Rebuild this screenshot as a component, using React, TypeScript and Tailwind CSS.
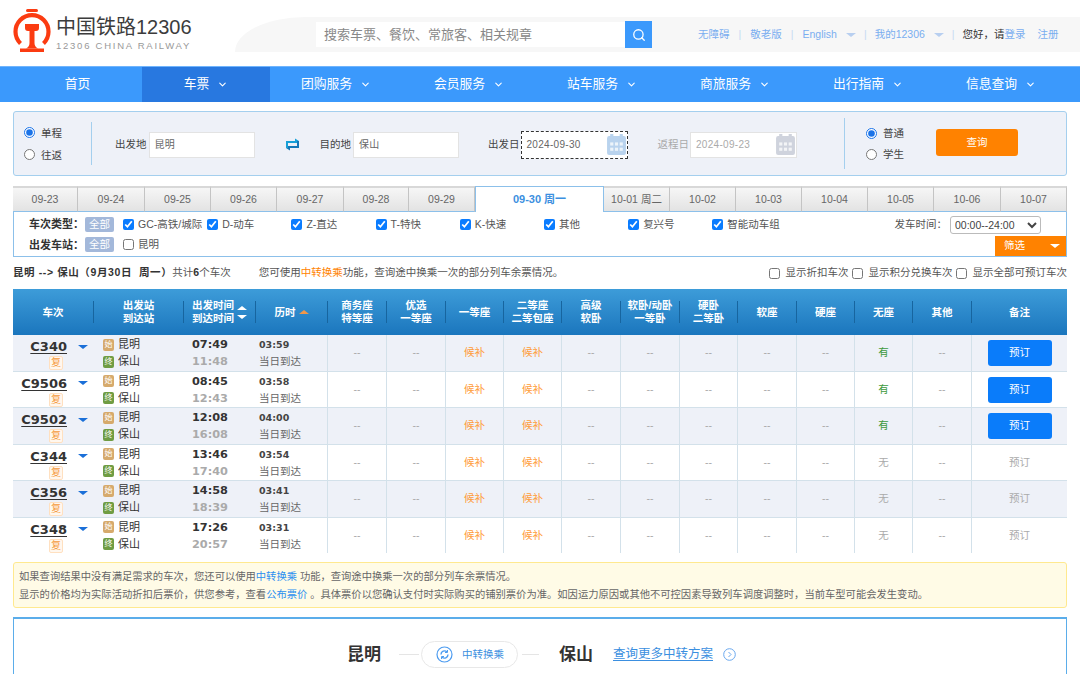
import { ChevronDown, Search } from "lucide-react";

const navItems = [
  { label: "首页", width: "w-[129px]", arrow: false },
  { label: "车票", width: "w-[128px] bg-[#2878e0]", arrow: true },
  { label: "团购服务", width: "w-[132px]", arrow: true },
  { label: "会员服务", width: "w-[134px]", arrow: true },
  { label: "站车服务", width: "w-[132px]", arrow: true },
  { label: "商旅服务", width: "w-[134px]", arrow: true },
  { label: "出行指南", width: "w-[132px]", arrow: true },
  { label: "信息查询", width: "w-[134px]", arrow: true },
];

const dates = [
  { label: "09-23", width: "w-[65px]" },
  { label: "09-24", width: "w-[67px]" },
  { label: "09-25", width: "w-[66px]" },
  { label: "09-26", width: "w-[66px]" },
  { label: "09-27", width: "w-[67px]" },
  { label: "09-28", width: "w-[65px]" },
  { label: "09-29", width: "w-[66px]" },
  { label: "09-30 周一", width: "w-[129px]", active: true },
  { label: "10-01 周二", width: "w-[66px]" },
  { label: "10-02", width: "w-[66px]" },
  { label: "10-03", width: "w-[66px]" },
  { label: "10-04", width: "w-[66px]" },
  { label: "10-05", width: "w-[66px]" },
  { label: "10-06", width: "w-[67px]" },
  { label: "10-07", width: "w-[66px]" },
];

const trainTypes = ["GC-高铁/城际", "D-动车", "Z-直达", "T-特快", "K-快速", "其他", "复兴号", "智能动车组"];

const trains = [
  { code: "C340", dep: "07:49", arr: "11:48", dur: "03:59", open: true },
  { code: "C9506", dep: "08:45", arr: "12:43", dur: "03:58", open: true },
  { code: "C9502", dep: "12:08", arr: "16:08", dur: "04:00", open: true },
  { code: "C344", dep: "13:46", arr: "17:40", dur: "03:54", open: false },
  { code: "C356", dep: "14:58", arr: "18:39", dur: "03:41", open: false },
  { code: "C348", dep: "17:26", arr: "20:57", dur: "03:31", open: false },
];

const columns = "grid grid-cols-[80px_90px_72px_72px_59px_59px_58px_58px_59px_59px_58px_59px_58px_58px_59px_96px]";

const headCells = [
  ["车次"],
  ["出发站", "到达站"],
  ["出发时间", "到达时间"],
  ["历时"],
  ["商务座", "特等座"],
  ["优选", "一等座"],
  ["一等座"],
  ["二等座", "二等包座"],
  ["高级", "软卧"],
  ["软卧/动卧", "一等卧"],
  ["硬卧", "二等卧"],
  ["软座"],
  ["硬座"],
  ["无座"],
  ["其他"],
  ["备注"],
];

function Logo() {
  return (
    <svg width="38" height="43" viewBox="0 0 38 43" className="shrink-0">
      <rect x="13" y="0" width="12" height="3" rx="1.5" fill="#fb3b11" />
      <path d="M7.5 34.5 A16.5 16.5 0 1 1 30.5 34.5" fill="none" stroke="#fb3b11" strokeWidth="4.2" />
      <path d="M12 15 H26 V19 Q26 22 23 22 H21.5 V34 Q21.5 37.5 25 39.5 H13 Q16.5 37.5 16.5 34 V22 H15 Q12 22 12 19 Z" fill="#fb3b11" />
      <rect x="7" y="39.5" width="24" height="3.5" fill="#fb3b11" />
    </svg>
  );
}

function Calendar({ dim }: { dim?: boolean }) {
  const color = dim ? "#cfd3dd" : "#b9d3ee";
  return (
    <svg width="19" height="21" viewBox="0 0 18 20" className="shrink-0">
      <rect x="0" y="2" width="18" height="18" rx="2" fill={color} />
      <rect x="3" y="0" width="3" height="4" fill={color} />
      <rect x="12" y="0" width="3" height="4" fill={color} />
      <g fill="#fff" opacity="0.75">
        <rect x="3" y="8" width="3" height="3" />
        <rect x="7.5" y="8" width="3" height="3" />
        <rect x="12" y="8" width="3" height="3" />
        <rect x="3" y="13" width="3" height="3" />
        <rect x="7.5" y="13" width="3" height="3" />
        <rect x="12" y="13" width="3" height="3" />
      </g>
    </svg>
  );
}

function SwapIcon() {
  return (
    <svg width="15" height="13" viewBox="0 0 15 13" className="shrink-0">
      <path d="M1 5 V3 H10 V0.5 L14 3 V5 Z" fill="#17a0d8" />
      <path d="M14 8 V10 H5 V12.5 L1 10 V8 Z" fill="#1578b8" />
      <rect x="1" y="3" width="2" height="7" fill="#17a0d8" />
      <rect x="12" y="3" width="2" height="7" fill="#1578b8" />
    </svg>
  );
}

function Caret({ className }: { className: string }) {
  return <span className={`inline-block h-0 w-0 border-x-[5px] border-x-transparent ${className}`} />;
}

function Field({ label, value, wide, dashed, dim }: { label: string; value: string; wide?: boolean; dashed?: boolean; dim?: boolean }) {
  return (
    <div className="mt-[2px] flex items-center">
      <span className={`text-[10.5px] ${wide ? "mr-px" : "mr-[2px]"} ${dim ? "text-[#aaa]" : "text-[#444]"}`}>{label}</span>
      <div
        className={`flex items-center justify-between bg-white pl-[5px] pr-[1px] text-[10px] ${wide ? "w-[107px]" : "w-[106px]"} ${
          dashed ? "h-[28px] border border-dashed border-[#333]" : "h-[26px] border border-[#e3e3e3]"
        } ${dim ? "text-[#aaa]" : "text-[#666]"}`}
      >
        <span className="tracking-[0.3px]">{value}</span>
        {wide && <Calendar dim={dim} />}
      </div>
    </div>
  );
}

function Radio({ label, checked }: { label: string; checked?: boolean }) {
  return (
    <label className="flex items-center gap-[6px] text-[10.5px] leading-[14px] text-[#444]">
      <input type="radio" readOnly checked={!!checked} className="m-0 h-[11px] w-[11px] accent-[#1a73e8]" />
      {label}
    </label>
  );
}

function Check({ label, checked, wide, className }: { label: string; checked?: boolean; wide?: boolean; className?: string }) {
  return (
    <label className={`flex items-center text-[10.5px] text-[#555] ${wide ? "gap-[6px]" : "gap-[4px]"} ${className ?? ""}`}>
      <input type="checkbox" readOnly checked={!!checked} className="m-0 h-[11px] w-[11px] shrink-0 accent-[#0a7cff]" />
      {label}
    </label>
  );
}

function AllBadge() {
  return (
    <span className="flex h-[15px] w-[29px] items-center justify-center rounded-[2px] bg-[#a3b8da] text-[10.5px] text-white">全部</span>
  );
}

function StationLine({ mark, name, tone }: { mark: string; name: string; tone: string }) {
  return (
    <div className="flex items-center gap-[4px]">
      <span className={`flex h-[12px] w-[11px] items-center justify-center rounded-[2px] text-[8px] leading-none text-white ${tone}`}>{mark}</span>
      <span className="text-[11px] leading-[17px] text-[#333]">{name}</span>
    </div>
  );
}

function SeatCell({ children, className }: { children?: React.ReactNode; className?: string }) {
  return (
    <div className={`flex items-center justify-center border-l border-[#d3e1ea] pt-px text-[10.5px] ${className ?? "text-[#aaa]"}`}>
      {children ?? "--"}
    </div>
  );
}

function TrainRow({ train, shaded }: { train: (typeof trains)[number]; shaded: boolean }) {
  return (
    <div className={`${columns} min-h-0 flex-1 border-b border-[#d3e1ea] last:border-b-0 ${shaded ? "bg-[#eef1f8]" : "bg-white"}`}>
      <div className="flex flex-col pr-[5px] pt-[2px]">
        <div className="flex h-[19px] items-center justify-end">
          <span className="font-['DejaVu_Sans',sans-serif] text-[13px] font-bold leading-none text-[#333] underline underline-offset-2">{train.code}</span>
          <Caret className="ml-[11px] border-t-[4px] border-t-[#1a6fd8]" />
        </div>
        <div className="flex justify-end pr-[25px]">
          <span className="flex h-[14px] w-[14px] items-center justify-center rounded-[2px] border border-[#ffe0c0] bg-[#fff7ee] text-[10px] leading-none text-[#f59a3c]">复</span>
        </div>
      </div>
      <div className="flex flex-col justify-center pl-[10px] pt-px">
        <StationLine mark="始" name="昆明" tone="bg-[#d6aa6c]" />
        <StationLine mark="终" name="保山" tone="bg-[#6f9c43]" />
      </div>
      <div className="flex flex-col justify-center pl-[9px] pt-px font-['DejaVu_Sans',sans-serif] text-[11.3px] font-bold leading-[17px]">
        <span className="text-[#333]">{train.dep}</span>
        <span className="text-[#aaa]">{train.arr}</span>
      </div>
      <div className="flex flex-col justify-center pl-[4px] pt-px leading-[17px]">
        <span className="font-['DejaVu_Sans',sans-serif] text-[9.5px] font-bold text-[#444]">{train.dur}</span>
        <span className="text-[10.5px] text-[#666]">当日到达</span>
      </div>
      <SeatCell />
      <SeatCell />
      <SeatCell className="text-[#ff9c38]">候补</SeatCell>
      <SeatCell className="text-[#ff9c38]">候补</SeatCell>
      <SeatCell />
      <SeatCell />
      <SeatCell />
      <SeatCell />
      <SeatCell />
      {train.open ? <SeatCell className="text-[#3c9a3c]">有</SeatCell> : <SeatCell>无</SeatCell>}
      <SeatCell />
      <SeatCell>
        {train.open ? (
          <button className="h-[26px] w-[64px] rounded-[3px] bg-[#0a7cfa] text-[10.5px] text-white">预订</button>
        ) : (
          "预订"
        )}
      </SeatCell>
    </div>
  );
}

export default function App() {
  return (
    <div className="h-[674px] w-[1080px] overflow-hidden bg-white font-['Liberation_Sans','Noto_Sans_CJK_SC',sans-serif]">
      {/* top bar */}
      <header className="flex h-[66px]">
        <div className="flex w-[235px] shrink-0 items-start pl-[13px] pt-[9px]">
          <Logo />
          <div className="ml-[5px] pt-[6px]">
            <div className="text-[20px] leading-[24px] text-[#3c3c3c]">中国铁路12306</div>
            <div className="mt-[1px] whitespace-nowrap text-[9.5px] leading-[12px] tracking-[1.75px] text-[#999]">12306 CHINA RAILWAY</div>
          </div>
        </div>
        <div className="mt-[17px] flex h-[35px] flex-1 items-center rounded-tl-[70px_35px] bg-[#f7f7f7] pl-[81px]">
          <div className="flex h-[25px] w-[309px] items-center bg-white pl-[8px] text-[13px] text-[#888]">搜索车票、餐饮、常旅客、相关规章</div>
          <div className="flex h-[27px] w-[27px] items-center justify-center bg-[#3b99fc]">
            <Search size={14} color="#fff" strokeWidth={2.2} />
          </div>
          <div className="ml-[46px] flex items-center text-[10.5px] text-[#7aaef0]">
            <span>无障碍</span>
            <span className="mx-[9px] text-[#c6daf2]">|</span>
            <span>敬老版</span>
            <span className="mx-[9px] text-[#c6daf2]">|</span>
            <span>English</span>
            <Caret className="ml-[9px] border-t-[4px] border-t-[#b8cff0]" />
            <span className="mx-[8px] text-[#c6daf2]">|</span>
            <span>我的12306</span>
            <Caret className="ml-[9px] border-t-[4px] border-t-[#b8cff0]" />
            <span className="mx-[8px] text-[#c6daf2]">|</span>
            <span className="text-[#333]">您好，请</span>
            <span>登录</span>
            <span className="ml-[12px]">注册</span>
          </div>
        </div>
      </header>

      {/* main nav */}
      <nav className="flex h-[36px] border-t border-[#6fb4fd] bg-[#3b99fc] pl-[13px] text-[12.8px] text-white">
        {navItems.map((item) => (
          <div key={item.label} className={`flex items-center justify-center gap-[8px] pb-px ${item.width}`}>
            {item.label}
            {item.arrow && <ChevronDown size={11} strokeWidth={2.4} />}
          </div>
        ))}
      </nav>

      <main className="mx-[13px] w-[1054px]">
        {/* search panel */}
        <section className="mt-[9px] flex h-[65px] items-center rounded-[3px] border border-[#a4cfee] bg-[#eef1f8]">
          <div className="ml-[10px] flex w-[67px] flex-col gap-[8px]">
            <Radio label="单程" checked />
            <Radio label="往返" />
          </div>
          <div className="h-[43px] w-px bg-[#a4cfee]" />
          <div className="ml-[23px]">
            <Field label="出发地" value="昆明" />
          </div>
          <div className="ml-[30px] mr-[20px] mt-[2px]">
            <SwapIcon />
          </div>
          <Field label="目的地" value="保山" />
          <div className="ml-[29px]">
            <Field label="出发日" value="2024-09-30" wide dashed />
          </div>
          <div className="ml-[30px]">
            <Field label="返程日" value="2024-09-23" wide dim />
          </div>
          <div className="ml-[47px] h-[51px] w-px bg-[#a4cfee]" />
          <div className="ml-[21px] flex w-[70px] flex-col gap-[7px]">
            <Radio label="普通" checked />
            <Radio label="学生" />
          </div>
          <button className="mb-[2px] h-[27px] w-[82px] rounded-[3px] bg-[#ff8200] text-[10.5px] text-white">查询</button>
        </section>

        {/* date tabs */}
        <div className="mt-[10px] flex h-[26px]">
          {dates.map((d) =>
            d.active ? (
              <div key={d.label} className={`flex items-center justify-center border-x border-t border-[#8cc0ea] bg-white text-[11px] font-bold text-[#3b8fe0] ${d.width}`}>
                {d.label}
              </div>
            ) : (
              <div key={d.label} className={`flex items-center justify-center border-r border-t-2 border-b border-r-[#c4c4c4] border-t-[#d8d8d8] border-b-[#8cc0ea] bg-gradient-to-b from-[#f6f6f6] to-[#e3e3e3] text-[10.5px] text-[#666] ${d.width}`}>
                {d.label}
              </div>
            ),
          )}
        </div>

        {/* filters */}
        <section className="flex h-[45px] flex-col border-x border-b border-[#8cc0ea] bg-white">
          <div className="flex h-[25px] items-center pt-px">
            <span className="ml-[15px] w-[56px] whitespace-nowrap text-[11px] font-bold text-[#333]">车次类型：</span>
            <AllBadge />
            <div className="ml-[9px] flex">
              {trainTypes.map((t) => (
                <Check key={t} label={t} checked className="w-[84.2px] whitespace-nowrap" />
              ))}
            </div>
            <span className="ml-auto text-[10.5px] text-[#555]">发车时间：</span>
            <select className="ml-[3px] mr-[25px] h-[18px] w-[91px] rounded-[3px] border border-[#bbb] bg-white text-[10.5px] text-[#444]" defaultValue="all">
              <option value="all">00:00--24:00</option>
            </select>
          </div>
          <div className="flex flex-1 items-end">
            <div className="mb-[3px] flex items-center">
              <span className="ml-[15px] w-[56px] whitespace-nowrap text-[11px] font-bold text-[#333]">出发车站：</span>
              <AllBadge />
              <Check label="昆明" className="ml-[9px]" />
            </div>
            <div className="ml-auto flex h-[20px] w-[71px] items-center justify-between bg-[#ff8200] pl-[9px] pr-[6px] text-[10.5px] text-white">
              筛选
              <Caret className="border-t-[4px] border-t-white" />
            </div>
          </div>
        </section>

        {/* summary */}
        <div className="flex h-[32px] items-center text-[10.5px] text-[#555]">
          <span className="font-bold tracking-[0.6px] text-[#333]">昆明 --&gt; 保山（9月30日&nbsp; 周一）</span>
          <span>共计<b className="text-[#333]">6</b>个车次</span>
          <span className="ml-[28px]">
            您可使用<b className="font-normal text-[#ff8200]">中转换乘</b>功能，查询途中换乘一次的部分列车余票情况。
          </span>
          <div className="ml-auto flex items-center gap-[3px]">
            <Check wide label="显示折扣车次" />
            <Check wide label="显示积分兑换车次" />
            <Check wide label="显示全部可预订车次" />
          </div>
        </div>

        {/* result table */}
        <section>
          <div className={`${columns} h-[46px] bg-gradient-to-b from-[#3d9cd9] to-[#1a76bd] text-[10.5px] font-bold leading-[13px] text-white`}>
            {headCells.map((lines, i) => (
              <div key={lines.join()} className="flex items-center">
                {i > 0 && <span className="h-[22px] w-px shrink-0 bg-[#17659f]" />}
                <div className="flex flex-1 items-center justify-center gap-[3px] text-center">
                  <div>
                    {lines.map((l) => (
                      <div key={l} className="whitespace-nowrap">{l}</div>
                    ))}
                  </div>
                  {i === 2 && (
                    <div className="flex flex-col gap-[5px]">
                      <Caret className="border-b-[4px] border-b-white" />
                      <Caret className="border-t-[4px] border-t-white" />
                    </div>
                  )}
                  {i === 3 && <Caret className="border-b-[4px] border-b-[#f0974a]" />}
                </div>
              </div>
            ))}
          </div>
          <div className="flex h-[218px] flex-col">
            {trains.map((t, i) => (
              <TrainRow key={t.code} train={t} shaded={i % 2 === 0} />
            ))}
          </div>
        </section>

        {/* notice */}
        <section className="mt-[9px] flex h-[46px] flex-col justify-center rounded-[3px] border border-[#ffe98f] bg-[#fffbe6] pl-[5px] pt-[2px] text-[10.3px] leading-[18px] text-[#666]">
          <div>
            如果查询结果中没有满足需求的车次，您还可以使用<span className="text-[#2b8ff0]">中转换乘</span> 功能，查询途中换乘一次的部分列车余票情况。
          </div>
          <div>
            显示的价格均为实际活动折扣后票价，供您参考，查看<span className="text-[#2b8ff0]">公布票价</span> 。具体票价以您确认支付时实际购买的铺别票价为准。如因运力原因或其他不可控因素导致列车调度调整时，当前车型可能会发生变动。
          </div>
        </section>

        {/* transfer box */}
        <section className="mt-[9px] flex h-[80px] items-start border-x border-t-2 border-[#5badea] pl-[333px] pt-[22px]">
          <div className="flex h-[27px] items-center">
            <span className="text-[17px] font-bold text-[#333]">昆明</span>
            <span className="ml-[18px] h-px w-[20px] bg-[#e5e5e5]" />
            <div className="ml-[2px] flex h-[27px] w-[97px] items-center rounded-full border border-[#e8e8e8] pl-[14px] text-[10.5px] text-[#3b8fe0]">
              <svg width="17" height="17" viewBox="0 0 17 17" fill="none" stroke="#4d9cf0" className="mr-[9px] shrink-0">
                <circle cx="8.5" cy="8.5" r="7.5" strokeWidth="1.2" />
                <path d="M5 8.5 A3.5 3.5 0 0 1 11 6 M12 8.5 A3.5 3.5 0 0 1 6 11" strokeWidth="1.4" />
                <path d="M11.5 4 V6.5 H9 M5.5 13 V10.5 H8" strokeWidth="1" />
              </svg>
              中转换乘
            </div>
            <span className="ml-[4px] h-px w-[17px] bg-[#e5e5e5]" />
            <span className="ml-[20px] text-[17px] font-bold text-[#333]">保山</span>
            <span className="ml-[20px] text-[12.5px] text-[#3b8fe0] underline underline-offset-2">查询更多中转方案</span>
            <svg width="13" height="13" viewBox="0 0 13 13" fill="none" stroke="#6aa8ee" className="ml-[10px] shrink-0">
              <circle cx="6.5" cy="6.5" r="5.8" />
              <path d="M5.5 4 L8 6.5 L5.5 9" />
            </svg>
          </div>
        </section>
      </main>
    </div>
  );
}
